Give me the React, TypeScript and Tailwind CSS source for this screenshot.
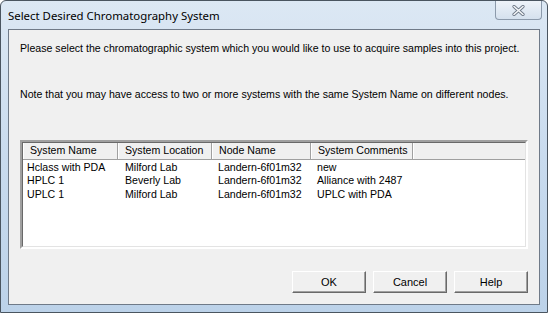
import React from 'react';

const rows = [
  { name: 'Hclass with PDA', location: 'Milford Lab', node: 'Landern-6f01m32', comments: 'new' },
  { name: 'HPLC 1', location: 'Beverly Lab', node: 'Landern-6f01m32', comments: 'Alliance with 2487' },
  { name: 'UPLC 1', location: 'Milford Lab', node: 'Landern-6f01m32', comments: 'UPLC with PDA' },
];

const cols = [
  { label: 'System Name', w: 'w-[95px]' },
  { label: 'System Location', w: 'w-[94px]' },
  { label: 'Node Name', w: 'w-[99px]' },
  { label: 'System Comments', w: 'w-[102px]' },
];

function Button({ label }: { label: string }) {
  return (
    <button className="w-[74px] h-[22px] bg-[#f0f0f0] border border-t-white border-l-white border-r-[#696969] border-b-[#696969] shadow-[inset_-1px_-1px_0_#a0a0a0] text-[11px] text-black leading-none">
      {label}
    </button>
  );
}

export default function App() {
  return (
    <div
      className="w-[548px] h-[313px] flex flex-col rounded-t-[6px] border border-[#4a5560] bg-gradient-to-b from-[#dce8f4] via-[#c9dbee] to-[#bcd2e9] overflow-hidden"
      style={{ fontFamily: '"Liberation Sans", Arial, sans-serif' }}
    >
      {/* Title bar */}
      <div className="h-[28px] flex items-start justify-between pl-[7px]">
        <span className="mt-[6px] text-[11.4px] text-black" style={{ fontFamily: '"Noto Sans", "Open Sans", sans-serif' }}>
          Select Desired Chromatography System
        </span>
        <div className="mr-[5px] w-[47px] h-[19px] rounded-b-[4px] border border-t-0 border-[#8c9aab] bg-gradient-to-b from-[#eef3f9] to-[#d5e1ee] flex items-center justify-center">
          <svg width="13" height="11" viewBox="0 0 13 11">
            <path d="M2 1.5 L11 9.5 M11 1.5 L2 9.5" stroke="#6b7685" strokeWidth="3.2" strokeLinecap="round" />
            <path d="M2 1.5 L11 9.5 M11 1.5 L2 9.5" stroke="#f4f6f8" strokeWidth="1.6" strokeLinecap="round" />
          </svg>
        </div>
      </div>

      {/* Client area */}
      <div className="mx-[7px] h-[276px] border border-[#6f7a88] bg-[#f0f0f0] flex flex-col px-[11px] text-[10.6px] text-black">
        <p className="mt-[12px] leading-[13px] whitespace-nowrap">
          Please select the chromatographic system which you would like to use to acquire samples into this project.
        </p>
        <p className="mt-[33px] leading-[13px] whitespace-nowrap">
          Note that you may have access to two or more systems with the same System Name on different nodes.
        </p>

        {/* List view */}
        <div className="mt-[39px] h-[109px] border-2 border-t-[#a0a0a0] border-l-[#a0a0a0] border-r-white border-b-white">
          <div className="h-full border border-t-[#696969] border-l-[#696969] border-r-[#e3e3e3] border-b-[#e3e3e3] bg-white">
            <div className="flex h-[17px] bg-[#f0f0f0] border-b border-[#a0a0a0]">
              {cols.map((c) => (
                <div
                  key={c.label}
                  className={`${c.w} h-full pl-[6px] flex items-center border-l border-l-white border-r border-r-[#a0a0a0] shadow-[1px_0_0_#696969] whitespace-nowrap`}
                >
                  {c.label}
                </div>
              ))}
              <div className="flex-1 border-l border-l-white" />
            </div>
            <div className="pt-[1px]">
              {rows.map((r) => (
                <div key={r.name} className="flex h-[13.5px] items-center">
                  <div className="w-[95px] pl-[4px] whitespace-nowrap">{r.name}</div>
                  <div className="w-[94px] pl-[7px] whitespace-nowrap">{r.location}</div>
                  <div className="w-[99px] pl-[6px] whitespace-nowrap">{r.node}</div>
                  <div className="w-[102px] pl-[6px] whitespace-nowrap">{r.comments}</div>
                </div>
              ))}
            </div>
          </div>
        </div>

        {/* Buttons */}
        <div className="mt-[22px] flex justify-end gap-[7px]">
          <Button label="OK" />
          <Button label="Cancel" />
          <Button label="Help" />
        </div>
      </div>
    </div>
  );
}
